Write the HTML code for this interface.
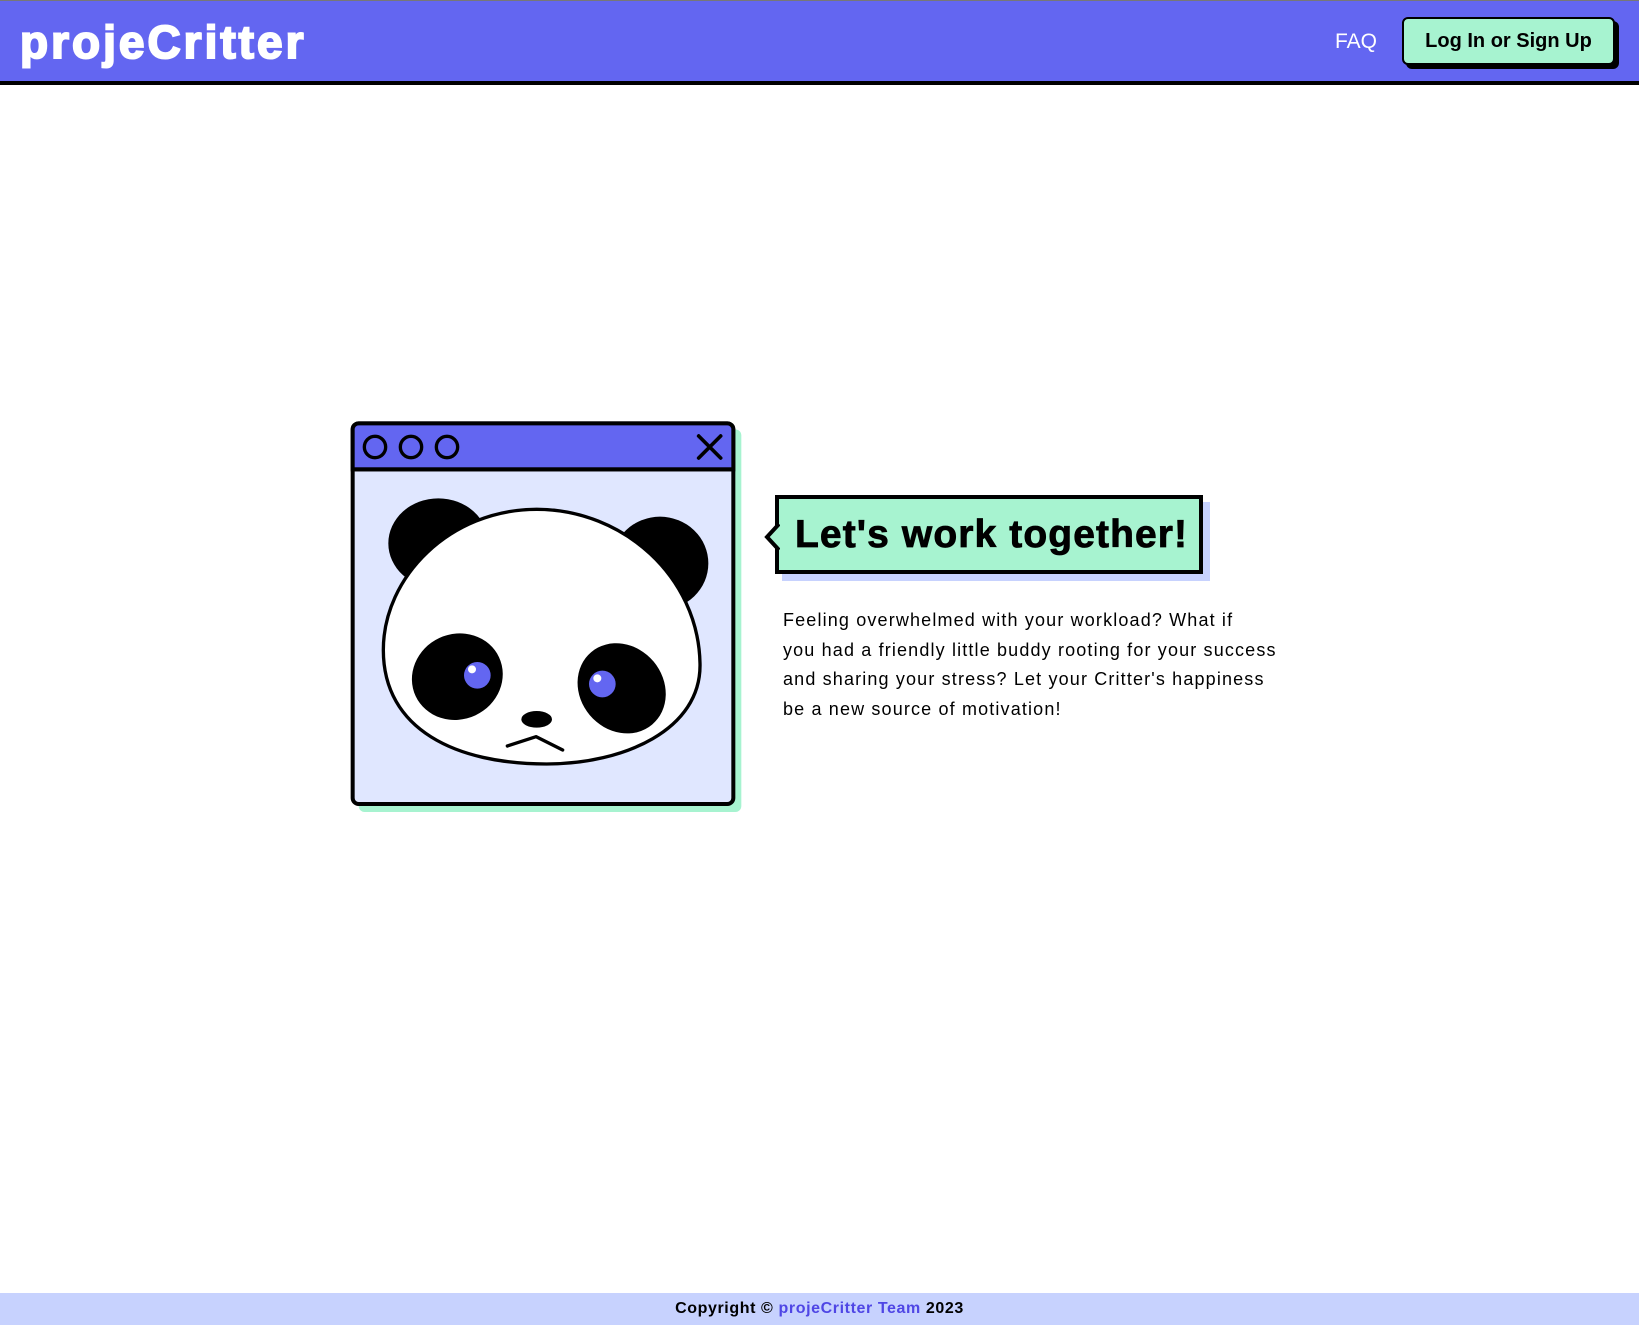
<!DOCTYPE html>
<html><head><meta charset="utf-8"><style>
*{margin:0;padding:0;box-sizing:border-box}
body{width:1639px;height:1325px;position:relative;background:#fff;font-family:"Liberation Sans",sans-serif;overflow:hidden}
.hdr{position:absolute;left:0;top:0;width:1639px;height:85px;background:#6366f1;border-top:1px solid #777;border-bottom:4px solid #000}
.logo{position:absolute;left:20px;top:14px;font-size:46px;font-weight:900;color:#fff;letter-spacing:3px;-webkit-text-stroke:2px #fff}
.faq{position:absolute;left:1335px;top:29px;font-size:21px;color:#fff}
.btn{position:absolute;left:1402px;top:16px;width:213px;height:48px;background:#a7f3d0;border:2px solid #000;border-radius:6px;box-shadow:4px 4px 0 #000;font-size:20px;font-weight:bold;text-align:center;line-height:44px;color:#000}
.ftr{position:absolute;left:0;top:1293px;width:1639px;height:32px;background:#c7d2fe;text-align:center;font-size:16px;font-weight:bold;line-height:32px;letter-spacing:0.6px}
.ftr span{color:#4f46e5}
.bub{position:absolute;left:775px;top:495px;width:428px;height:79px;background:#a7f3d0;border:4px solid #000;box-shadow:7px 7px 0 #c7d2fe}
.bub h1{position:absolute;left:16px;top:14px;font-size:39px;font-weight:900;white-space:nowrap;letter-spacing:1.1px;-webkit-text-stroke:0.8px #000}
.p{position:absolute;left:783px;top:606px;font-size:18px;line-height:29.5px;white-space:nowrap;color:#000;letter-spacing:1.15px}
</style></head><body>
<div class="hdr"><div class="logo">projeCritter</div><div class="faq">FAQ</div><div class="btn">Log In or Sign Up</div></div>

<svg style="position:absolute;left:340px;top:410px" width="420" height="410" viewBox="0 0 1260 1230">
<rect x="56" y="58" width="1148" height="1148" rx="18" fill="#a7f3d0"/>
<rect x="38" y="40" width="1142" height="1142" rx="18" fill="#e0e7ff" stroke="#000" stroke-width="12"/>
<path d="M38 58 a18 18 0 0 1 18 -18 h1106 a18 18 0 0 1 18 18 v120 h-1142z" fill="#6366f1" stroke="#000" stroke-width="12"/>
<line x1="38" y1="178" x2="1180" y2="178" stroke="#000" stroke-width="12"/>
<circle cx="105" cy="111" r="32" fill="none" stroke="#000" stroke-width="10"/>
<circle cx="213" cy="111" r="32" fill="none" stroke="#000" stroke-width="10"/>
<circle cx="321" cy="111" r="32" fill="none" stroke="#000" stroke-width="10"/>
<path d="M1076 78 L1142 144 M1142 78 L1076 144" stroke="#000" stroke-width="11" stroke-linecap="round"/>
<ellipse cx="295" cy="400" rx="150" ry="135" fill="#000"/>
<ellipse cx="960" cy="460" rx="145" ry="140" fill="#000"/>
<path d="M590 298 C850 298 1075 500 1080 760 C1085 960 850 1062 620 1062 C350 1062 130 960 130 720 C130 500 330 298 590 298Z" fill="#fff" stroke="#000" stroke-width="10"/>
<ellipse cx="352" cy="800" rx="138" ry="128" transform="rotate(-25 352 800)" fill="#000"/>
<ellipse cx="845" cy="835" rx="125" ry="142" transform="rotate(-40 845 835)" fill="#000"/>
<circle cx="412" cy="796" r="40" fill="#6366f1"/><circle cx="396" cy="778" r="12" fill="#fff"/>
<circle cx="787" cy="822" r="40" fill="#6366f1"/><circle cx="772" cy="805" r="12" fill="#fff"/>
<ellipse cx="590" cy="928" rx="46" ry="25" fill="#000"/>
<polyline points="502,1008 588,980 668,1020" fill="none" stroke="#000" stroke-width="10" stroke-linecap="round" stroke-linejoin="round"/>
</svg>

<div class="bub"><h1>Let's work together!</h1></div>
<svg style="position:absolute;left:762px;top:522px" width="18" height="30" viewBox="0 0 18 30"><path d="M17 2 L5 15 L17 28" fill="#a7f3d0" stroke="#000" stroke-width="4"/></svg>
<div class="p">Feeling overwhelmed with your workload? What if<br>you had a friendly little buddy rooting for your success<br>and sharing your stress? Let your Critter's happiness<br>be a new source of motivation!</div>

<div class="ftr">Copyright © <span>projeCritter Team</span> 2023</div>
</body></html>
